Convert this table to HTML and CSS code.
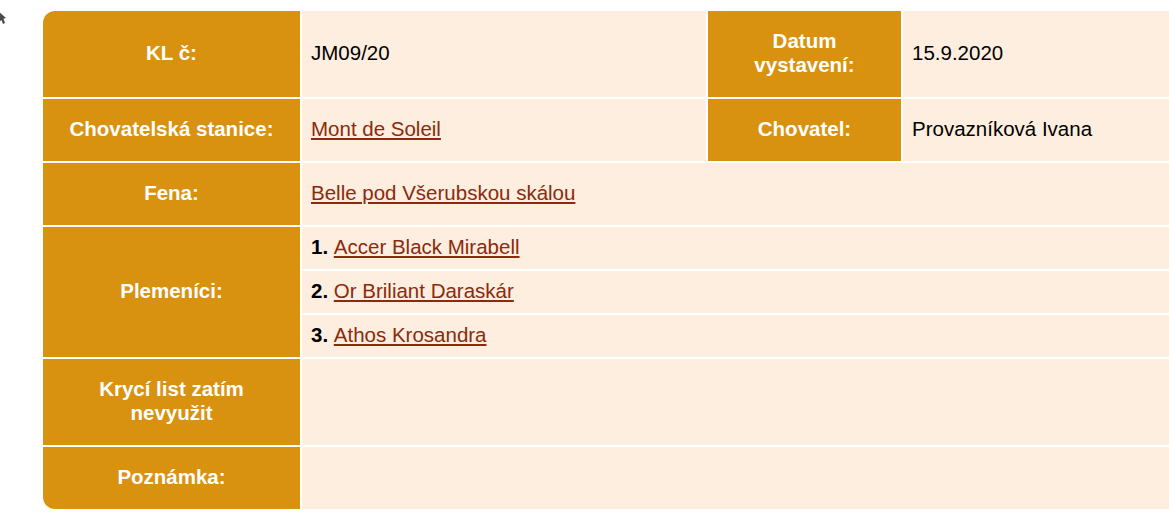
FILE: index.html
```html
<!DOCTYPE html>
<html lang="cs">
<head>
<meta charset="utf-8">
<title>Krycí list</title>
<link rel="stylesheet" href="styles.css">
</head>
<body>
<svg class="cursor" width="8" height="18" viewBox="0 0 8 18"><path d="M0 0 L7 6 L4.5 6.8 L6 11 L4 12 L2.5 8 L0 10 Z" fill="#4a4a4a"/></svg>
<div class="wrap">
  <div class="sheet">
    <div class="lab first">KL č:</div>
    <div class="val">JM09/20</div>
    <div class="lab">Datum vystavení:</div>
    <div class="val">15.9.2020</div>

    <div class="lab">Chovatelská stanice:</div>
    <div class="val"><a href="#">Mont de Soleil</a></div>
    <div class="lab">Chovatel:</div>
    <div class="val">Provazníková Ivana</div>

    <div class="lab">Fena:</div>
    <div class="val wide"><a href="#">Belle pod Všerubskou skálou</a></div>

    <div class="lab span3">Plemeníci:</div>
    <div class="val wide sub"><b>1.</b>&nbsp;<a href="#">Accer Black Mirabell</a></div>
    <div class="val wide sub"><b>2.</b>&nbsp;<a href="#">Or Briliant Daraskár</a></div>
    <div class="val wide sub"><b>3.</b>&nbsp;<a href="#">Athos Krosandra</a></div>

    <div class="lab">Krycí list zatím nevyužit</div>
    <div class="val wide"></div>

    <div class="lab last">Poznámka:</div>
    <div class="val wide"></div>
  </div>
</div>
</body>
</html>
```
FILE: styles.css
```css
html, body {
  margin: 0;
  padding: 0;
  background: #ffffff;
  overflow: hidden;
}
body {
  font-family: "Liberation Sans", Arial, Helvetica, sans-serif;
  font-size: 20.5px;
  line-height: 24px;
  color: #000;
}
.cursor {
  position: absolute;
  left: -1px;
  top: 12px;
}
.wrap {
  padding: 11px 0 0 43px;
}
.sheet {
  display: grid;
  grid-template-columns: 257px 404px 193px 1fr;
  gap: 2px;
}
.lab {
  background: #d9920f;
  color: #fff;
  font-weight: bold;
  text-align: center;
  padding: 18px 18px 20px;
  display: flex;
  align-items: center;
  justify-content: center;
}
.lab.first { border-top-left-radius: 12px; }
.lab.last { border-bottom-left-radius: 12px; }
.lab.span3 { grid-row: span 3; }
.val {
  background: #fdeedf;
  padding: 18px 9px 20px;
  display: flex;
  align-items: center;
}
.val.wide { grid-column: span 3; }
.val.sub { padding-top: 8px; padding-bottom: 10px; }
.val b { font-weight: bold; }
.val a {
  color: #8b2a0c;
  text-decoration: underline;
}
```
